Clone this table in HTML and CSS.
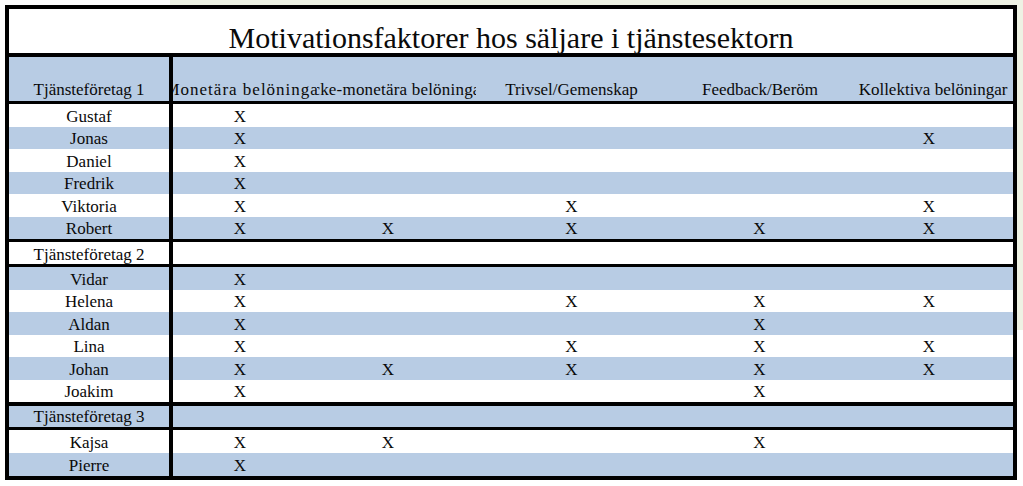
FILE: index.html
```html
<!DOCTYPE html>
<html lang="sv">
<head>
<meta charset="utf-8">
<title>Motivationsfaktorer hos säljare i tjänstesektorn</title>
<link rel="stylesheet" href="styles.css">
</head>
<body>
<div class="page">
  <div class="sheet">
    <div class="title">Motivationsfaktorer hos säljare i tjänstesektorn</div>
    <div class="head">
      <div class="hcell first"><span>Tjänsteföretag 1</span></div>
      <div class="hcell"><span class="wide">Monetära belöningar</span></div>
      <div class="hcell"><span class="wide2">Icke-monetära belöningar</span></div>
      <div class="hcell"><span>Trivsel/Gemenskap</span></div>
      <div class="hcell"><span>Feedback/Beröm</span></div>
      <div class="hcell"><span>Kollektiva belöningar</span></div>
    </div>

    <div class="group g6">
      <div class="row"><div class="cell first">Gustaf</div><div class="cell">X</div><div class="cell"></div><div class="cell"></div><div class="cell"></div><div class="cell"></div></div>
      <div class="row blue"><div class="cell first">Jonas</div><div class="cell">X</div><div class="cell"></div><div class="cell"></div><div class="cell"></div><div class="cell">X</div></div>
      <div class="row"><div class="cell first">Daniel</div><div class="cell">X</div><div class="cell"></div><div class="cell"></div><div class="cell"></div><div class="cell"></div></div>
      <div class="row blue"><div class="cell first">Fredrik</div><div class="cell">X</div><div class="cell"></div><div class="cell"></div><div class="cell"></div><div class="cell"></div></div>
      <div class="row"><div class="cell first">Viktoria</div><div class="cell">X</div><div class="cell"></div><div class="cell">X</div><div class="cell"></div><div class="cell">X</div></div>
      <div class="row blue"><div class="cell first">Robert</div><div class="cell">X</div><div class="cell">X</div><div class="cell">X</div><div class="cell">X</div><div class="cell">X</div></div>
    </div>

    <div class="row company c2"><div class="cell first">Tjänsteföretag 2</div><div class="cell span"></div></div>

    <div class="group g6 thick">
      <div class="row blue"><div class="cell first">Vidar</div><div class="cell">X</div><div class="cell"></div><div class="cell"></div><div class="cell"></div><div class="cell"></div></div>
      <div class="row"><div class="cell first">Helena</div><div class="cell">X</div><div class="cell"></div><div class="cell">X</div><div class="cell">X</div><div class="cell">X</div></div>
      <div class="row blue"><div class="cell first">Aldan</div><div class="cell">X</div><div class="cell"></div><div class="cell"></div><div class="cell">X</div><div class="cell"></div></div>
      <div class="row"><div class="cell first">Lina</div><div class="cell">X</div><div class="cell"></div><div class="cell">X</div><div class="cell">X</div><div class="cell">X</div></div>
      <div class="row blue"><div class="cell first">Johan</div><div class="cell">X</div><div class="cell">X</div><div class="cell">X</div><div class="cell">X</div><div class="cell">X</div></div>
      <div class="row"><div class="cell first">Joakim</div><div class="cell">X</div><div class="cell"></div><div class="cell"></div><div class="cell">X</div><div class="cell"></div></div>
    </div>

    <div class="row company c3 blue"><div class="cell first">Tjänsteföretag 3</div><div class="cell span"></div></div>

    <div class="group g2">
      <div class="row"><div class="cell first">Kajsa</div><div class="cell">X</div><div class="cell">X</div><div class="cell"></div><div class="cell">X</div><div class="cell"></div></div>
      <div class="row blue"><div class="cell first">Pierre</div><div class="cell">X</div><div class="cell"></div><div class="cell"></div><div class="cell"></div><div class="cell"></div></div>
    </div>
  </div>
</div>
</body>
</html>
```

FILE: styles.css
```css
html, body {
  margin: 0;
  padding: 0;
  background: #ffffff;
}

body {
  font-family: "Liberation Serif", "Times New Roman", serif;
  color: #0a0a0a;
  width: 1023px;
  height: 486px;
  overflow: hidden;
}

.page {
  position: relative;
  padding: 5px 0 0 5px;
}

.page::before {
  content: "";
  position: absolute;
  left: 170px;
  top: 0;
  right: 0;
  height: 330px;
  background: #eef2e4;
}

.sheet {
  position: relative;
  width: 1004px;
  border: 4px solid #000;
  background: #fff;
}

.title {
  box-sizing: content-box;
  height: 32px;
  padding-top: 12px;
  font-size: 30px;
  line-height: 34px;
  text-align: center;
  white-space: nowrap;
  border-bottom: 4px solid #000;
}

.head {
  display: grid;
  grid-template-columns: 164px 144px 159px 191px 186px 160px;
  height: 44px;
  background: #b8cce4;
  border-bottom: 3px solid #000;
}

.hcell {
  display: flex;
  justify-content: center;
  align-items: flex-end;
  overflow: hidden;
  white-space: nowrap;
  font-size: 17px;
  line-height: 20px;
  padding-bottom: 1px;
}

.hcell span {
  flex: none;
}

.hcell.first {
  border-right: 4px solid #000;
}

.hcell .wide {
  letter-spacing: 1px;
}

.hcell .wide2 {
  letter-spacing: 0.2px;
}

.group {
  border-bottom: 3px solid #000;
}

.group.thick {
  border-bottom: 4px solid #000;
}

.group.g2 {
  border-bottom: 0;
}

.row {
  display: grid;
  grid-template-columns: 164px 134px 162px 205px 171px 168px;
  height: 22.5px;
  background: #fff;
}

.row.blue {
  background: #b8cce4;
}

.g2 .row {
  height: 23px;
}

.cell {
  box-sizing: border-box;
  padding-top: 1.5px;
  font-size: 17px;
  line-height: 21px;
  text-align: center;
  white-space: nowrap;
  overflow: hidden;
}

.cell.first {
  border-right: 4px solid #000;
}

.cell.span {
  grid-column: 2 / 7;
}

.row.company {
  border-bottom: 3px solid #000;
}

.row.c2 {
  height: 22px;
}

.row.c3 {
  height: 21px;
}

.row.c3 .cell {
  padding-top: 1px;
  line-height: 20px;
}
```
